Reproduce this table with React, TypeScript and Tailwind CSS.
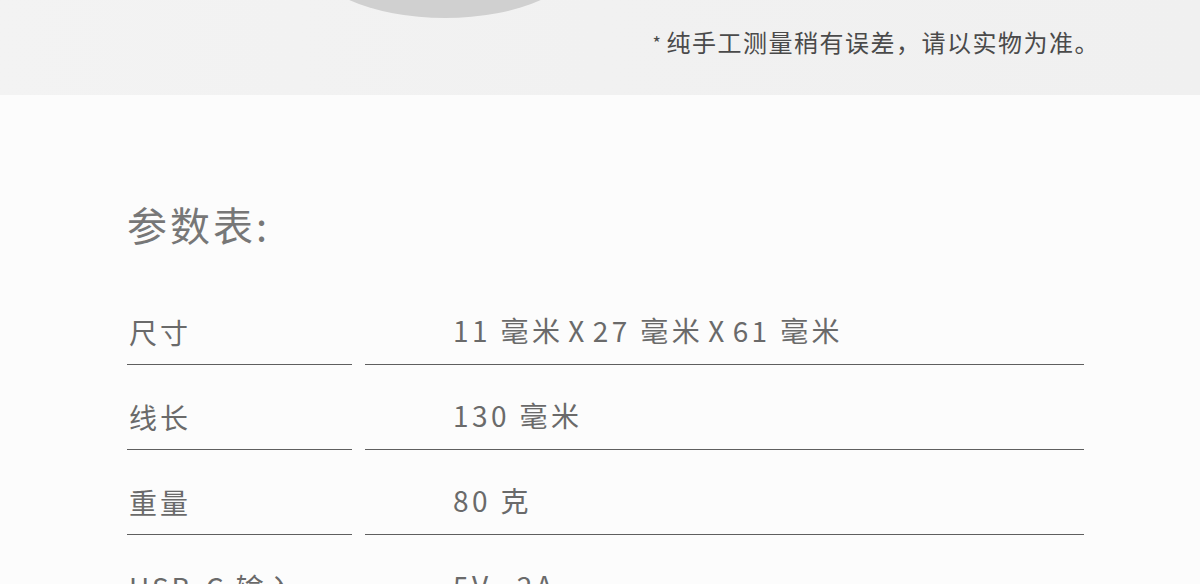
const rows = [
  { label: "尺寸", value: ["11 毫米", "27 毫米", "61 毫米"] },
  { label: "线长", value: ["130 毫米"] },
  { label: "重量", value: ["80 克"] },
  { label: "USB-C 输入", value: ["5V⎓2A"] },
];

export default function App() {
  return (
    <div
      className="h-[584px] w-[1200px] overflow-hidden bg-[#fcfcfc]"
      style={{ fontFamily: '"Noto Sans CJK SC", "Liberation Sans", sans-serif' }}
    >
      {/* Top band with product edge */}
      <div className="relative h-[95px] bg-gradient-to-r from-[#f3f3f3] via-[#f1f1f1] to-[#f0f0f0]">
        <svg
          className="absolute left-[300px] top-0"
          width="300"
          height="26"
          viewBox="0 0 300 26"
        >
          <defs>
            <radialGradient id="shade" cx="0.5" cy="0" r="0.75">
              <stop offset="0" stopColor="#e2e2e2" />
              <stop offset="0.7" stopColor="#d6d6d6" />
              <stop offset="1" stopColor="#d0d0d0" />
            </radialGradient>
          </defs>
          <ellipse cx="145" cy="-44" rx="136" ry="62" fill="url(#shade)" />
        </svg>
        <div className="flex h-full justify-end pr-[100px] pt-[26px]">
          <p className="text-[24px] leading-[32px] tracking-[1.5px] text-[#4a4a4a]">
            <span className="mr-[4px] align-top text-[18px]">*</span>
            纯手工测量稍有误差，请以实物为准。
          </p>
        </div>
      </div>

      {/* Spec table */}
      <div className="ml-[127px] w-[957px] pt-[109px]">
        <h2 className="text-[40px] leading-[40px] tracking-[3px] text-[#777777]">
          参数表:
        </h2>
        <div className="mt-[36px]">
          {rows.map((r) => (
            <div key={r.label} className="grid grid-cols-[225px_1fr] gap-x-[13px]">
              <div className="flex h-[85px] items-end border-b border-[#5f5f5f] pb-[17px] pl-[2px] text-[28px] leading-[30px] tracking-[3px] text-[#6a6a6a]">
                {r.label}
              </div>
              <div className="flex h-[85px] items-end border-b border-[#5f5f5f] pb-[19px] pl-[88px] text-[28px] leading-[30px] tracking-[3.4px] text-[#6a6a6a]">
                {r.value.map((v, i) => (
                  <span key={i} className="whitespace-pre">
                    {i > 0 && <span className="mx-[5px]">X</span>}
                    {v}
                  </span>
                ))}
              </div>
            </div>
          ))}
        </div>
      </div>
    </div>
  );
}
